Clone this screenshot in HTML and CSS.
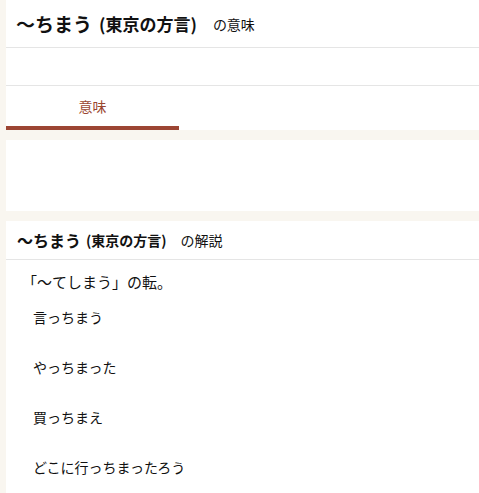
FILE: index.html
```html
<!DOCTYPE html>
<html lang="ja">
<head>
<meta charset="utf-8">
<link rel="stylesheet" href="styles.css">
</head>
<body>
<div class="page">
  <section class="panel">
    <h1 class="title"><span class="word">〜ちまう</span><span class="kind">(東京の方言)</span><span class="suffix">の意味</span></h1>
    <div class="blank"></div>
    <div class="tabs">
      <div class="tab active">意味</div>
    </div>
  </section>
  <section class="panel empty"></section>
  <section class="panel">
    <h2 class="title small"><span class="word">〜ちまう</span><span class="kind">(東京の方言)</span><span class="suffix">の解説</span></h2>
    <p class="lead">「〜てしまう」の転。</p>
    <ul class="examples">
      <li>言っちまう</li>
      <li>やっちまった</li>
      <li>買っちまえ</li>
      <li>どこに行っちまったろう</li>
    </ul>
  </section>
</div>
</body>
</html>
```

FILE: styles.css
```css
html, body {
  margin: 0;
  padding: 0;
  background: #f9f6f0;
  font-family: "Noto Sans CJK JP", "Noto Sans", sans-serif;
  color: #111;
}
.page {
  padding-left: 6px;
  display: flex;
  flex-direction: column;
  gap: 10px;
}
.panel {
  background: #fff;
}
.title {
  margin: 0;
  height: 47px;
  border-bottom: 1px solid #e5e5e5;
  display: flex;
  align-items: center;
  padding-left: 10px;
  font-weight: bold;
}
.title .word {
  font-size: 19px;
}
.title .kind {
  font-size: 17px;
  margin-left: 7px;
}
.title .suffix {
  font-size: 14px;
  font-weight: normal;
  margin-left: 16px;
}
.blank {
  height: 37px;
  border-bottom: 1px solid #e5e5e5;
}
.tabs {
  display: flex;
}
.tab {
  width: 173px;
  height: 40px;
  display: flex;
  align-items: center;
  justify-content: center;
  font-size: 14px;
  color: #9a4630;
}
.tab.active {
  border-bottom: 4px solid #9c4533;
}
.empty {
  height: 71px;
}
.title.small {
  height: 38px;
  padding-left: 11px;
  align-items: center;
}
.title.small .word {
  font-size: 16px;
}
.title.small .kind {
  font-size: 14px;
  margin-left: 5px;
}
.title.small .suffix {
  font-size: 14px;
  margin-left: 14px;
}
.lead {
  margin: 0;
  padding: 10px 0 0 16px;
  font-size: 15px;
  line-height: 24px;
}
.examples {
  list-style: none;
  margin: 0;
  padding: 13px 0 30px 27px;
  font-size: 14px;
  display: flex;
  flex-direction: column;
  gap: 30px;
}
.examples li {
  line-height: 20px;
}
```
